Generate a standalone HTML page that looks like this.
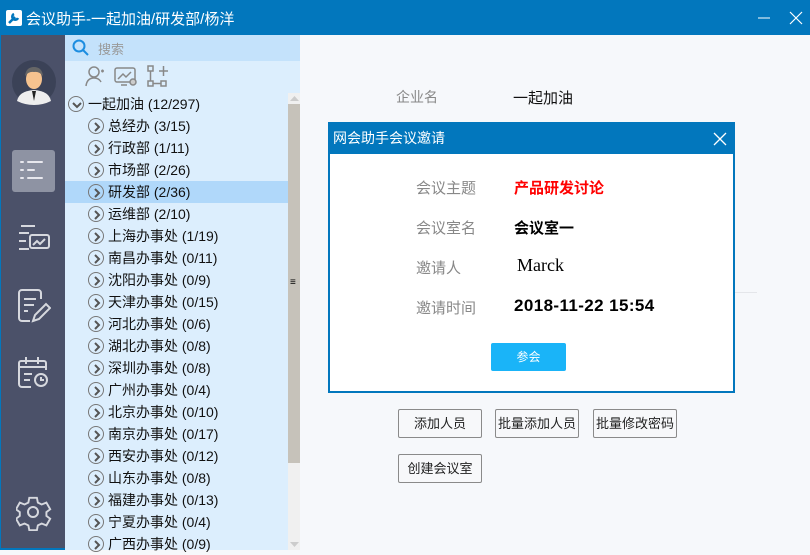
<!DOCTYPE html>
<html><head><meta charset="utf-8"><style>
*{margin:0;padding:0;box-sizing:border-box}
body{width:810px;height:550px;overflow:hidden;font-family:"Liberation Sans","Noto Sans CJK SC",sans-serif;background:#f6f8fb;position:relative;font-size:14px}
.abs{position:absolute}
#title{left:0;top:0;width:810px;height:35px;background:#0277bd;color:#fff;font-size:15px}
#side{left:0;top:35px;width:65px;height:515px;background:#4b5169;border-left:1px solid #0277bd;border-bottom:2px solid #0277bd}
#tree{left:65px;top:35px;width:235px;height:515px;background:#dceefd}
.row{position:absolute;left:0;width:223px;height:22px;line-height:22px;font-size:14px;color:#111}
.ci{position:absolute;top:3px;width:16px;height:16px;border:1.5px solid #777;border-radius:50%}
.ci svg{position:absolute;left:2px;top:2px}
.btn{position:absolute;height:29px;border:1px solid #8a8a8a;border-radius:2px;background:#f7f8fa;font-size:13px;color:#222;text-align:center;line-height:27px}
.lab{position:absolute;left:86px;color:#888;font-size:15px}
</style></head><body>
<div id="title" class="abs">
 <div class="abs" style="left:6px;top:10px;width:16px;height:16px;background:#fff;border-radius:2px"><svg width="16" height="16"><path d="M3 13 L9 7 M8 4 a3 3 0 1 0 4 4" stroke="#0277bd" stroke-width="2.5" fill="none"/></svg></div>
 <div class="abs" style="left:26px;top:8px">会议助手-一起加油/研发部/杨洋</div>
 <svg class="abs" style="left:758px;top:10px" width="50" height="16"><path d="M0 8H12" stroke="#fff"/><path d="M32 2L44 14M44 2L32 14" stroke="#fff" stroke-width="1.2"/></svg>
</div>
<div id="side" class="abs">
 <svg class="abs" style="left:10px;top:24px" width="46" height="46"><circle cx="23" cy="23" r="22" fill="#3b4257"/><path d="M6 42 Q8 32 23 31 Q38 32 40 42 Q32 46 23 46 Q14 46 6 42Z" fill="#eee"/><path d="M21 32 L23 42 L25 32Z" fill="#222"/><ellipse cx="23" cy="20" rx="8" ry="10" fill="#f6c38f"/><path d="M14 17 Q15 8 23 8 Q31 8 32 17 Q28 12 23 13 Q18 12 14 17Z" fill="#666"/></svg>
 <div class="abs" style="left:11px;top:115px;width:43px;height:42px;background:#8e93a3;border-radius:3px"></div>
 <svg class="abs" style="left:11px;top:115px" width="43" height="42" stroke="#e8e8ee" stroke-width="2" stroke-linecap="round"><path d="M9 12h2M16 12h14M9 20h2M16 20h6M9 28h2M16 28h14"/></svg>
 <svg class="abs" style="left:16px;top:188px" width="34" height="30" stroke="#d6d8de" stroke-width="2" fill="none"><path d="M4 3h14M2 10h10M2 18h7M2 26h10"/><rect x="13" y="12" width="19" height="13" rx="2"/><path d="M16 22l4-4 3 3 5-5"/></svg>
 <svg class="abs" style="left:16px;top:252px" width="34" height="36" stroke="#d6d8de" stroke-width="2" fill="none"><path d="M24 12V6a3 3 0 0 0-3-3H5a3 3 0 0 0-3 3v25a3 3 0 0 0 3 3h8"/><path d="M7 12h12M7 18h10M7 24h4"/><path d="M16 34l2-6 11-11 4 4-11 11z"/></svg>
 <svg class="abs" style="left:16px;top:318px" width="34" height="36" stroke="#d6d8de" stroke-width="2" fill="none"><path d="M24 8h3a2 2 0 0 1 2 2v7M14 34H5a3 3 0 0 1-3-3V10a2 2 0 0 1 2-2h20"/><path d="M9 4v7M21 4v7M2 14h27M7 21h8M7 27h6"/><circle cx="24" cy="27" r="6"/><path d="M24 24v3h3"/></svg>
 <svg class="abs" style="left:15px;top:460px" width="36" height="36" stroke="#d6d8de" stroke-width="2" fill="none"><path d="M14 3h8l1 5 4 2 5-2 4 7-4 3v4l4 3-4 7-5-2-4 2-1 5h-8l-1-5-4-2-5 2-4-7 4-3v-4l-4-3 4-7 5 2 4-2z" transform="scale(0.95)"/><circle cx="17" cy="17" r="5"/></svg>
</div>
<div id="tree" class="abs">
 <div class="abs" style="left:0;top:0;width:235px;height:26px;background:#c4e2fb"></div>
 <svg class="abs" style="left:7px;top:4px" width="18" height="18" stroke="#1c8de0" stroke-width="2" fill="none"><circle cx="7" cy="7" r="5.5"/><path d="M11 11l5 5"/></svg>
 <div class="abs" style="left:33px;top:4px;color:#999;font-size:13px">搜索</div>
 <svg class="abs" style="left:18px;top:28px" width="90" height="26" stroke="#888" stroke-width="1.5" fill="none"><circle cx="11" cy="9" r="5"/><path d="M3 23q1-8 8-8q5 0 7 4M18 8h3M19.5 6.5v3"/><rect x="32" y="5" width="20" height="14" rx="2"/><path d="M35 16l5-5 3 3 5-5M38 22h6"/><circle cx="50" cy="19" r="3" fill="#ccc"/><rect x="65" y="3" width="5" height="5"/><rect x="65" y="18" width="5" height="5"/><rect x="78" y="18" width="5" height="5"/><path d="M67.5 8v10M70 20.5h8M80.5 3v10M76 8h9"/></svg>
 <div class="abs" style="left:223px;top:58px;width:12px;height:457px;background:#f0f0f0"></div>
 <div class="abs" style="left:223px;top:69px;width:12px;height:359px;background:#c6c2ba"></div>
 <div class="abs" style="left:225px;top:244px;font-size:10px;line-height:8px">≡</div>
 <svg class="abs" style="left:225px;top:61px" width="9" height="6"><path d="M0 5L4.5 0L9 5Z" fill="#ccc"/></svg>
 <svg class="abs" style="left:225px;top:507px" width="9" height="6"><path d="M0 0L4.5 5L9 0Z" fill="#ccc"/></svg>
 <div class="abs" style="left:0;top:146px;width:223px;height:22px;background:#b0d8fa"></div>
 <div id="rows"></div>
</div>
<script>
var d=[["一起加油 (12/297)",1],["总经办 (3/15)"],["行政部 (1/11)"],["市场部 (2/26)"],["研发部 (2/36)"],["运维部 (2/10)"],["上海办事处 (1/19)"],["南昌办事处 (0/11)"],["沈阳办事处 (0/9)"],["天津办事处 (0/15)"],["河北办事处 (0/6)"],["湖北办事处 (0/8)"],["深圳办事处 (0/8)"],["广州办事处 (0/4)"],["北京办事处 (0/10)"],["南京办事处 (0/17)"],["西安办事处 (0/12)"],["山东办事处 (0/8)"],["福建办事处 (0/13)"],["宁夏办事处 (0/4)"],["广西办事处 (0/9)"]];
var h="";d.forEach(function(r,i){var top=58+i*22,l=r[1]?3:23;
var arr=r[1]?'<path d="M2 4l4 4 4-4" stroke="#555" stroke-width="2" fill="none"/>':'<path d="M4 2l4 4-4 4" stroke="#555" stroke-width="2" fill="none"/>';
h+='<div class="row" style="top:'+top+'px"><div class="ci" style="left:'+l+'px"><svg width="12" height="12">'+arr+'</svg></div><span style="position:absolute;left:'+(l+20)+'px">'+r[0]+'</span></div>';});
document.getElementById("rows").innerHTML=h;
</script>
<div class="abs" style="left:396px;top:87px;color:#888;font-size:14px">企业名</div>
<div class="abs" style="left:513px;top:87px;color:#111;font-size:15px">一起加油</div>
<div class="abs" style="left:735px;top:292px;width:22px;height:1px;background:#e4e6ea"></div>
<div class="abs" style="left:328px;top:122px;width:407px;height:271px;background:#fff;border:2px solid #0277bd">
 <div class="abs" style="left:-2px;top:-2px;width:407px;height:32px;background:#0277bd;color:#fff;font-size:14px;line-height:32px;padding-left:5px">网会助手会议邀请</div>
 <svg class="abs" style="left:383px;top:8px" width="14" height="14" stroke="#fff" stroke-width="1.3"><path d="M1 1l12 12M13 1L1 13"/></svg>
 <div class="lab" style="top:53px">会议主题</div>
 <div class="abs" style="left:184px;top:53px;color:#f00;font-weight:bold;font-size:15px">产品研发讨论</div>
 <div class="lab" style="top:93px">会议室名</div>
 <div class="abs" style="left:184px;top:93px;color:#000;font-weight:bold;font-size:15px">会议室一</div>
 <div class="lab" style="top:133px">邀请人</div>
 <div class="abs" style="left:187px;top:131px;color:#000;font-family:'Liberation Serif',serif;font-size:18px">Marck</div>
 <div class="lab" style="top:173px">邀请时间</div>
 <div class="abs" style="left:184px;top:172px;color:#000;font-weight:bold;font-size:17px;letter-spacing:0.4px">2018-11-22 15:54</div>
 <div class="abs" style="left:161px;top:219px;width:75px;height:28px;background:#1ab4f8;color:#fff;font-size:12px;text-align:center;line-height:28px;border-radius:2px">参会</div>
</div>
<div class="btn" style="left:398px;top:409px;width:84px">添加人员</div>
<div class="btn" style="left:495px;top:409px;width:84px">批量添加人员</div>
<div class="btn" style="left:593px;top:409px;width:84px">批量修改密码</div>
<div class="btn" style="left:398px;top:454px;width:84px">创建会议室</div>
</body></html>
